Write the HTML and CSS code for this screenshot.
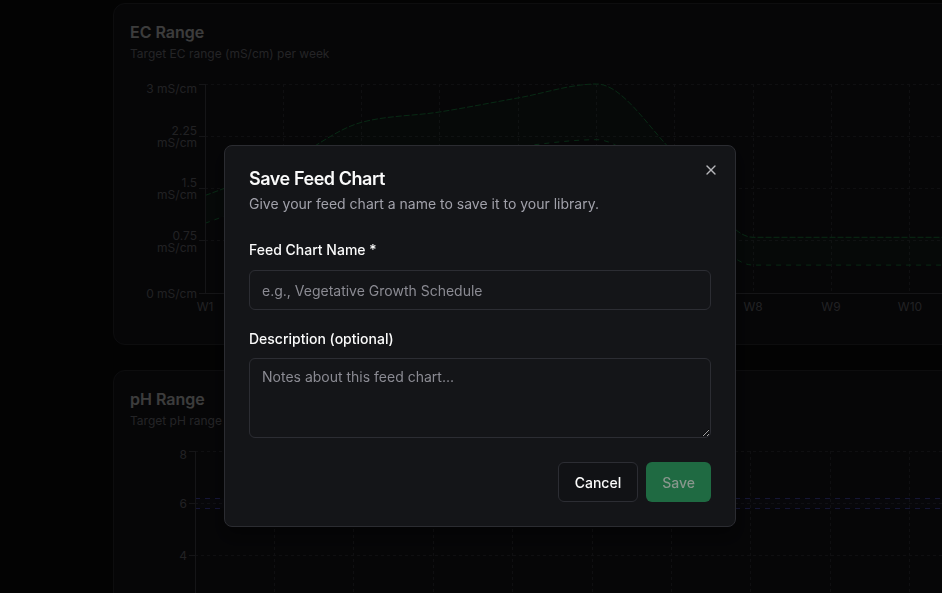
FILE: index.html
```html
<!DOCTYPE html>
<html lang="en">

<head>
    <meta charset="UTF-8">
    <meta name="viewport" content="width=device-width, initial-scale=1.0">
    <title>Feed Chart</title>
    <link rel="stylesheet" href="styles.css">
</head>

<body>
    <main class="page">
        <section class="card">
            <h2 class="card-title">EC Range</h2>
            <p class="card-sub">Target EC range (mS/cm) per week</p>
            <svg class="chart chart-ec" width="1066" height="258" viewBox="130 70 1066 258">
                <!-- grid -->
                <g class="grid">
                    <line x1="205" y1="84.5" x2="1180" y2="84.5" />
                    <line x1="205" y1="136.5" x2="1180" y2="136.5" />
                    <line x1="205" y1="188.5" x2="1180" y2="188.5" />
                    <line x1="205" y1="240.5" x2="1180" y2="240.5" />
                    <line x1="283.5" y1="84" x2="283.5" y2="293" />
                    <line x1="361.5" y1="84" x2="361.5" y2="293" />
                    <line x1="439.5" y1="84" x2="439.5" y2="293" />
                    <line x1="518.5" y1="84" x2="518.5" y2="293" />
                    <line x1="596.5" y1="84" x2="596.5" y2="293" />
                    <line x1="674.5" y1="84" x2="674.5" y2="293" />
                    <line x1="753.5" y1="84" x2="753.5" y2="293" />
                    <line x1="831.5" y1="84" x2="831.5" y2="293" />
                    <line x1="909.5" y1="84" x2="909.5" y2="293" />
                    <line x1="988.5" y1="84" x2="988.5" y2="293" />
                    <line x1="1066.5" y1="84" x2="1066.5" y2="293" />
                    <line x1="1144.5" y1="84" x2="1144.5" y2="293" />
                </g>

                <!-- range area -->
                <path class="ec-fill" d="M205,195.5 C231.1,185.9 257.2,176.3 283.3,164.1 C309.4,151.9 335.5,129.2 361.6,122.3 C387.7,115.4 413.8,116 439.9,111.9 C466,107.8 492.1,102.5 518.2,97.9 C544.3,93.3 570.4,84 596.5,84 C622.6,84 648.7,128.2 674.8,153.7 C700.9,179.2 727,237.3 753.1,237.3 L1180,237.3 L1180,265.1 L753.1,265.1 C727,265.1 700.9,216.4 674.8,195.5 C648.7,174.6 622.6,139.7 596.5,139.7 C570.4,139.7 544.3,143.8 518.2,146.7 C492.1,149.6 466,153 439.9,157.1 C413.8,161.2 387.7,164.7 361.6,171.1 C335.5,177.5 309.4,186.8 283.3,195.5 C257.2,204.2 231.1,213.75 205,223.3 Z" />
                <path class="ec-max" d="M205,195.5 C231.1,185.9 257.2,176.3 283.3,164.1 C309.4,151.9 335.5,129.2 361.6,122.3 C387.7,115.4 413.8,116 439.9,111.9 C466,107.8 492.1,102.5 518.2,97.9 C544.3,93.3 570.4,84 596.5,84 C622.6,84 648.7,128.2 674.8,153.7 C700.9,179.2 727,237.3 753.1,237.3 L1180,237.3" />
                <path class="ec-min" d="M205,223.3 C231.1,213.75 257.2,204.2 283.3,195.5 C309.4,186.8 335.5,177.5 361.6,171.1 C387.7,164.7 413.8,161.2 439.9,157.1 C466,153 492.1,149.6 518.2,146.7 C544.3,143.8 570.4,139.7 596.5,139.7 C622.6,139.7 648.7,174.6 674.8,195.5 C700.9,216.4 727,265.1 753.1,265.1 L1180,265.1" />

                <!-- axes -->
                <g class="axis">
                    <line x1="205.5" y1="84" x2="205.5" y2="293" />
                    <line x1="205" y1="293.5" x2="1180" y2="293.5" />
                    <line x1="199" y1="84.5" x2="205" y2="84.5" />
                    <line x1="199" y1="136.5" x2="205" y2="136.5" />
                    <line x1="199" y1="188.5" x2="205" y2="188.5" />
                    <line x1="199" y1="240.5" x2="205" y2="240.5" />
                    <line x1="199" y1="293.5" x2="205" y2="293.5" />
                </g>
                <g class="tick-y">
                    <text x="197" y="92.5">3 mS/cm</text>
                    <text x="197" y="135"><tspan x="197">2.25</tspan><tspan x="197" dy="12">mS/cm</tspan></text>
                    <text x="197" y="187.3"><tspan x="197">1.5</tspan><tspan x="197" dy="12">mS/cm</tspan></text>
                    <text x="197" y="240"><tspan x="197">0.75</tspan><tspan x="197" dy="12">mS/cm</tspan></text>
                    <text x="197" y="297.5">0 mS/cm</text>
                </g>
                <g class="tick-x">
                    <text x="205" y="311">W1</text>
                    <text x="283" y="311">W2</text>
                    <text x="362" y="311">W3</text>
                    <text x="440" y="311">W4</text>
                    <text x="518" y="311">W5</text>
                    <text x="597" y="311">W6</text>
                    <text x="675" y="311">W7</text>
                    <text x="753" y="311">W8</text>
                    <text x="831" y="311">W9</text>
                    <text x="910" y="311">W10</text>
                    <text x="988" y="311">W11</text>
                    <text x="1066" y="311">W12</text>
                </g>
            </svg>
        </section>

        <section class="card">
            <h2 class="card-title">pH Range</h2>
            <p class="card-sub">Target pH range per week</p>
            <svg class="chart chart-ph" width="1066" height="250" viewBox="130 438 1066 250">
                <g class="grid">
                    <line x1="195" y1="452.5" x2="1180" y2="452.5" />
                    <line x1="195" y1="504.5" x2="1180" y2="504.5" />
                    <line x1="195" y1="556.5" x2="1180" y2="556.5" />
                    <line x1="195" y1="608.5" x2="1180" y2="608.5" />
                    <line x1="274.5" y1="452" x2="274.5" y2="661" />
                    <line x1="353.5" y1="452" x2="353.5" y2="661" />
                    <line x1="433.5" y1="452" x2="433.5" y2="661" />
                    <line x1="512.5" y1="452" x2="512.5" y2="661" />
                    <line x1="592.5" y1="452" x2="592.5" y2="661" />
                    <line x1="671.5" y1="452" x2="671.5" y2="661" />
                    <line x1="750.5" y1="452" x2="750.5" y2="661" />
                    <line x1="830.5" y1="452" x2="830.5" y2="661" />
                    <line x1="909.5" y1="452" x2="909.5" y2="661" />
                    <line x1="989.5" y1="452" x2="989.5" y2="661" />
                    <line x1="1068.5" y1="452" x2="1068.5" y2="661" />
                    <line x1="1147.5" y1="452" x2="1147.5" y2="661" />
                </g>

                <rect class="ph-fill" x="195" y="499.2" width="985" height="10.4" />
                <line class="ph-line" x1="195" y1="499.5" x2="1180" y2="499.5" />
                <line class="ph-line" x1="195" y1="509.5" x2="1180" y2="509.5" />

                <g class="axis">
                    <line x1="195.5" y1="452" x2="195.5" y2="661" />
                    <line x1="189" y1="452.5" x2="195" y2="452.5" />
                    <line x1="189" y1="504.5" x2="195" y2="504.5" />
                    <line x1="189" y1="556.5" x2="195" y2="556.5" />
                    <line x1="189" y1="608.5" x2="195" y2="608.5" />
                </g>
                <g class="tick-y">
                    <text x="187" y="460">8</text>
                    <text x="187" y="509">6</text>
                    <text x="187" y="561">4</text>
                    <text x="187" y="613">2</text>
                </g>
            </svg>
        </section>
    </main>

    <div class="overlay"></div>

    <div class="dialog" role="dialog">
        <button class="dialog-close" type="button" aria-label="Close">
            <svg width="16" height="16" viewBox="0 0 24 24" fill="none" stroke="currentColor" stroke-width="2"
                stroke-linecap="round" stroke-linejoin="round">
                <path d="M18 6 6 18" />
                <path d="m6 6 12 12" />
            </svg>
        </button>

        <div class="dialog-header">
            <h2 class="dialog-title">Save Feed Chart</h2>
            <p class="dialog-desc">Give your feed chart a name to save it to your library.</p>
        </div>

        <form class="dialog-form">
            <div class="field">
                <label class="field-label" for="chart-name">Feed Chart Name *</label>
                <input class="field-input" id="chart-name" type="text" placeholder="e.g., Vegetative Growth Schedule">
            </div>
            <div class="field field-desc">
                <label class="field-label" for="chart-desc">Description (optional)</label>
                <textarea class="field-textarea" id="chart-desc" placeholder="Notes about this feed chart..."></textarea>
            </div>
            <div class="dialog-footer">
                <button class="btn btn-outline" type="button">Cancel</button>
                <button class="btn btn-save" type="submit" disabled>Save</button>
            </div>
        </form>
    </div>
</body>

</html>
```

FILE: styles.css
```css
html,
body {
    margin: 0;
    padding: 0;
    overflow: hidden;
}

body {
    font-family: "Inter", "Liberation Sans", sans-serif;
    background-color: #0c0c0d;
    color: #fafafa;
    width: 942px;
    height: 593px;
}

.page {
    padding: 3px 0 0 113px;
    display: flex;
    flex-direction: column;
    gap: 25px;
    width: 1100px;
}

.card {
    background-color: #18181d;
    border: 1px solid #34353b;
    border-radius: 12px;
    padding: 16px;
}

.card-title {
    margin: 0;
    font-size: 16px;
    line-height: 24px;
    font-weight: 600;
    color: #ededed;
}

.card-sub {
    margin: 2px 0 0;
    font-size: 12px;
    line-height: 16px;
    color: #8f8f97;
}

.chart {
    display: block;
    margin-top: 8px;
    overflow: visible;
}

.grid line {
    stroke: #3f3f46;
    stroke-width: 1;
    stroke-dasharray: 3 3;
}

.axis line {
    stroke: #55555d;
    stroke-width: 1;
}

.tick-y text,
.tick-x text {
    font-family: "Inter", "Liberation Sans", sans-serif;
    font-size: 12px;
    fill: #85858d;
}

.tick-y text {
    text-anchor: end;
}

.tick-x text {
    text-anchor: middle;
}

.ec-fill {
    fill: rgba(34, 197, 94, 0.07);
}

.ec-max,
.ec-min {
    fill: none;
    stroke: #1fa650;
    stroke-width: 1;
}

.ec-max {
    stroke-dasharray: 6 2;
}

.ec-min {
    stroke-dasharray: 5 5;
}

.ph-fill {
    fill: rgba(99, 102, 241, 0.06);
}

.ph-line {
    stroke: #5558d8;
    stroke-width: 1;
    stroke-dasharray: 5 5;
}

/* modal */
.overlay {
    position: fixed;
    inset: 0;
    background-color: rgba(0, 0, 0, 0.75);
}

.dialog {
    position: fixed;
    left: 224px;
    top: 145px;
    width: 512px;
    box-sizing: border-box;
    padding: 24px;
    background-color: #141518;
    border: 1px solid #2b2c31;
    border-radius: 8px;
    box-shadow: 0 10px 15px rgba(0, 0, 0, 0.3);
}

.dialog-close {
    position: absolute;
    top: 16px;
    right: 16px;
    width: 16px;
    height: 16px;
    padding: 0;
    border: none;
    background: none;
    color: #d4d4d8;
    opacity: 0.85;
    cursor: pointer;
}

.dialog-close svg {
    display: block;
}

.dialog-title {
    margin: 0;
    font-size: 18px;
    line-height: 18px;
    font-weight: 600;
    letter-spacing: -0.025em;
}

.dialog-desc {
    margin: 6px 0 0;
    font-size: 14px;
    line-height: 20px;
    color: #a1a1aa;
}

.dialog-form {
    margin-top: 26px;
}

.field {
    display: flex;
    flex-direction: column;
    gap: 10px;
}

.field-desc {
    margin-top: 19px;
    gap: 9px;
}

.field-label {
    font-size: 14px;
    line-height: 20px;
    font-weight: 500;
    color: #fafafa;
}

.field-input,
.field-textarea {
    box-sizing: border-box;
    width: 100%;
    background-color: transparent;
    border: 1px solid #2c2d33;
    border-radius: 6px;
    color: #fafafa;
    font-family: inherit;
    font-size: 14px;
    line-height: 20px;
    margin: 0;
}

.field-input {
    height: 40px;
    padding: 0 12px;
}

.field-textarea {
    height: 80px;
    padding: 8px 12px;
}

.field-input::placeholder,
.field-textarea::placeholder {
    color: #8b8b93;
}

.dialog-footer {
    display: flex;
    justify-content: flex-end;
    gap: 8px;
    margin-top: 24px;
}

.btn {
    height: 40px;
    padding: 0 16px;
    border-radius: 6px;
    font-family: inherit;
    font-size: 14px;
    font-weight: 500;
    cursor: pointer;
}

.btn-outline {
    background-color: #111215;
    border: 1px solid #2c2d33;
    color: #fafafa;
}

.btn-save {
    background-color: #1f6a42;
    border: none;
    color: #88978d;
}
```
